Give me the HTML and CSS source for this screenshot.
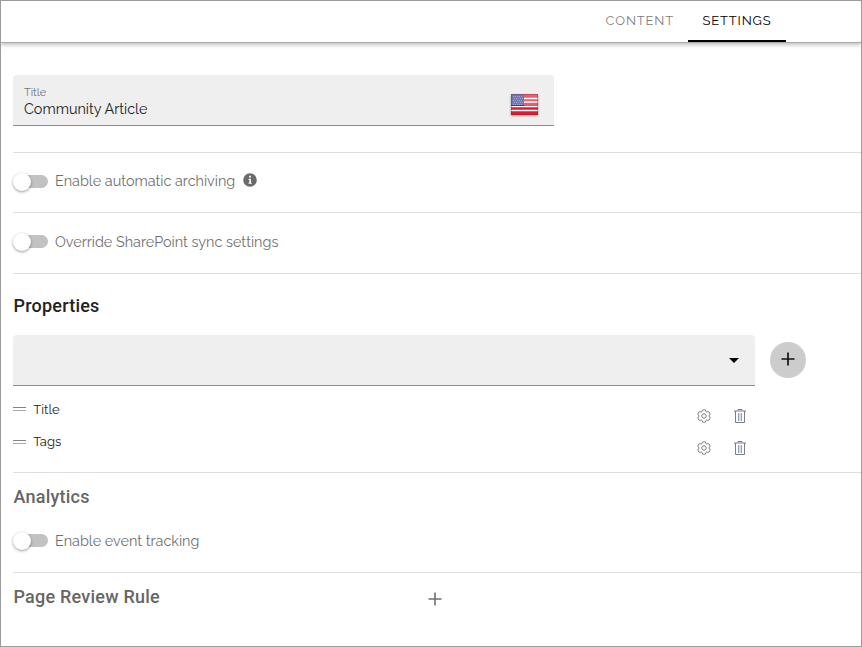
FILE: index.html
```html
<!DOCTYPE html>
<html lang="en">
<head>
<meta charset="utf-8">
<title>Page settings</title>
<link rel="stylesheet" href="styles.css">
</head>
<body>
<svg class="defs" width="0" height="0" aria-hidden="true">
  <symbol id="gear" viewBox="0 0 14 14"><path stroke-linejoin="round" d="M5.700.8h2.600L9.400 2.900l2.400-.2 1.400 2.300L11.900 7l1.300 2-1.400 2.300-2.400-.2-1.100 2.100H5.700l-1.100-2.100-2.400.2L.8 9 2.100 7 .8 5l1.400-2.300 2.400.2z"/><circle cx="7" cy="7" r="2.200"/></symbol>
  <symbol id="trash" viewBox="0 0 12 14"><path d="M0 2h12M4 1.700V.5h4v1.200M1.500 2v11.500h9V2"/><path d="M4.500 4v8M7.500 4v8" stroke="#7fa6d6"/><path d="M6 4v8" stroke="#bbb"/></symbol>
</svg>
<div class="page">
  <header class="tabs">
    <a class="tab">CONTENT</a>
    <a class="tab active">SETTINGS</a>
  </header>
  <main>
    <section class="title-section">
      <div class="field">
        <div>
          <div class="field-label">Title</div>
          <div class="field-value">Community Article</div>
        </div>
        <svg class="flag" width="27" height="21" viewBox="0 0 27 21">
          <rect width="27" height="21" fill="#e3182f"/>
          <path d="M0 4.500h27M0 8h27" stroke="#fff" stroke-width="1.300"/>
          <path d="M0 12.500h27M0 16.500h27" stroke="#fff" stroke-width="1.300"/>
          <rect width="13" height="12" fill="#343b8c"/>
          <path d="M2 2.500h10M3 4.500h9M2 6.500h10M3 8.500h9M2 10.500h10" stroke="#8084ba" stroke-dasharray="1 1"/>
          <rect width="27" height="11" fill="#fff" opacity=".3"/>
          <rect x=".5" y=".5" width="26" height="20" fill="none" stroke="#7a2935" stroke-opacity=".35"/>
        </svg>
      </div>
    </section>
    <section class="toggle-row archive">
      <span class="switch"></span><span class="label">Enable automatic archiving</span>
      <svg class="info" width="14" height="14" viewBox="0 0 14 14"><circle cx="7" cy="7" r="6.800" fill="#6b6b6b"/><path d="M5.600 5.700h2.300v4.100h.8v1H5.500v-1h.8V6.700h-.7zM6.100 2.800h1.800v1.800H6.100z" fill="#fff"/></svg>
    </section>
    <section class="toggle-row override">
      <span class="switch"></span><span class="label">Override SharePoint sync settings</span>
    </section>
    <section class="properties">
      <h2>Properties</h2>
      <div class="picker">
        <div class="select"><svg width="10" height="5" viewBox="0 0 10 5"><path d="M0 0h10L5 5z"/></svg></div>
        <button class="add"><svg width="14" height="14" viewBox="0 0 14 14"><path d="M7 .5v13M.5 7h13" stroke="#111" stroke-width="1.700"/></svg></button>
      </div>
      <div class="property"><i class="grip"></i><span class="name">Title</span><svg class="icon gear"><use href="#gear"/></svg><svg class="icon trash"><use href="#trash"/></svg></div>
      <div class="property"><i class="grip"></i><span class="name">Tags</span><svg class="icon gear"><use href="#gear"/></svg><svg class="icon trash"><use href="#trash"/></svg></div>
    </section>
    <section class="analytics">
      <h2>Analytics</h2>
      <div class="toggle-row"><span class="switch"></span><span class="label">Enable event tracking</span></div>
    </section>
    <section class="review">
      <h2>Page Review Rule</h2>
      <svg width="14" height="14" viewBox="0 0 14 14"><path d="M7 .5v13M.5 7h13" stroke="#707070" stroke-width="1.600"/></svg>
    </section>
  </main>
</div>
</body>
</html>
```
FILE: styles.css
```css
* { box-sizing: border-box; }
body { margin: 0; background: #fff; font-family: Raleway, Lato, sans-serif; color: #222; }
.defs { display: block; }
.page { width: 862px; height: 647px; border: 1px solid #9b9b9b; overflow: hidden; }
.tabs { height: 42px; display: flex; justify-content: flex-end; padding-right: 75px; border-bottom: 1px solid #aaa; box-shadow: 0 2px 4px rgba(0,0,0,.25); }
.tab { height: 41px; padding: 0 14px; font-size: 13px; line-height: 39px; letter-spacing: .85px; color: #808080; white-space: nowrap; }
.tab.active { width: 98px; padding-left: 14.5px; color: #000; border-bottom: 2px solid #000; }
main { padding-left: 12px; }
section { border-bottom: 1px solid #dedede; }
.title-section { height: 110px; padding-top: 32px; }
.field { width: 541px; height: 51px; padding: 0 16px 0 11px; display: flex; align-items: center; justify-content: space-between; background: #efefef; border-bottom: 1px solid #8c8c8c; border-radius: 4px 4px 0 0; }
.field-label { font-size: 11px; line-height: 14px; color: #777; margin-top: 4px; }
.field-value { font-size: 14.4px; line-height: 18px; white-space: nowrap; }
.flag { margin-top: 8px; filter: drop-shadow(0 1px 1px rgba(0,0,0,.35)); }
.toggle-row { display: flex; align-items: center; }
.archive { height: 60px; padding-bottom: 2px; }
.override { height: 61px; padding-bottom: 2px; }
.switch { position: relative; width: 34px; height: 13px; margin-left: 1px; border-radius: 7px; background: #c2c2c2; }
.switch::before { content: ""; position: absolute; left: -1px; top: -2px; width: 18px; height: 18px; border-radius: 50%; background: #fff; box-shadow: 0 1px 3px rgba(0,0,0,.4); }
.label { margin-left: 7px; font-size: 14.4px; line-height: 20px; color: #717171; white-space: nowrap; }
.archive .label { margin-top: -1px; }
.override .switch { margin-top: -1px; }
.info { margin: -3px 0 0 7.5px; }
h2 { margin: 0; padding-left: .5px; font: 500 18px/24px Roboto, sans-serif; letter-spacing: .22px; color: #666; }
.properties { height: 199px; padding-top: 20px; }
.properties h2 { color: #222; }
.picker { display: flex; align-items: flex-start; gap: 15px; margin-top: 17px; margin-bottom: 8px; }
.select { width: 742px; height: 51px; display: flex; align-items: center; justify-content: flex-end; padding-right: 16px; background: #efefef; border-bottom: 1px solid #8c8c8c; border-radius: 4px 4px 0 0; }
.add { width: 36px; height: 36px; margin-top: 7px; padding: 0 0 2px; display: grid; place-items: center; border: 0; border-radius: 50%; background: #ccc; }
.property { height: 32px; width: 733px; display: flex; align-items: center; }
.grip { width: 13px; height: 4px; border-top: 1px solid #858585; border-bottom: 1px solid #aaa; margin: -2px 7.3px 0 0; }
.property + .property .grip { margin-top: 0; }
.name { font-size: 13px; line-height: 18px; flex: 1; }
.icon { height: 14px; margin-top: 12px; fill: none; stroke: #7d7d86; stroke-width: 1; }
.gear { width: 14px; margin-right: 22.6px; }
.trash { width: 12px; }
.analytics { height: 100px; padding-top: 12px; }
.analytics .toggle-row { height: 20px; margin-top: 22px; }
.analytics .switch { margin-top: -1px; }
.review { display: flex; align-items: center; border: 0; padding-top: 12px; }
.review h2 { width: 415px; }
.review svg { margin-top: 4px; }
```
